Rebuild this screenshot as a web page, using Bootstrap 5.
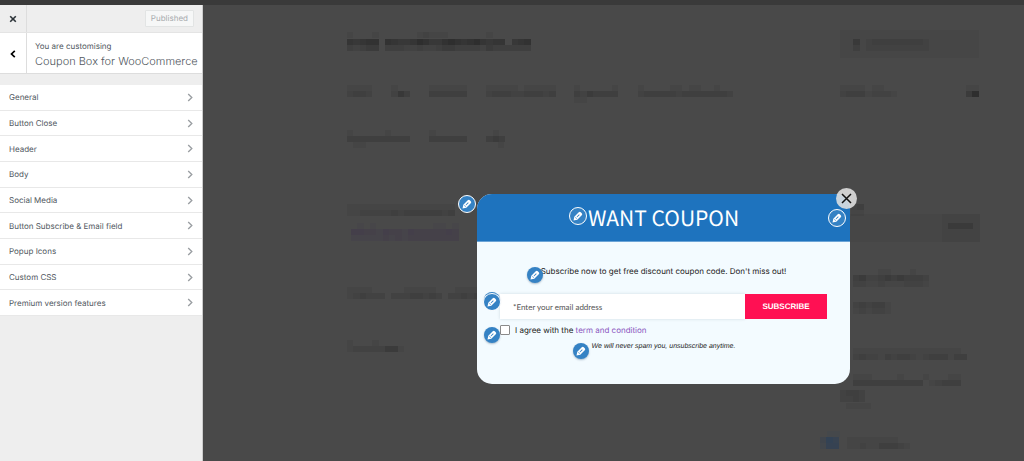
<!DOCTYPE html>
<html lang="en">
<head>
<meta charset="utf-8">
<meta name="viewport" content="width=device-width, initial-scale=1">
<title>Customise: Coupon Box for WooCommerce</title>
<link href="https://cdn.jsdelivr.net/npm/bootstrap@5.3.0/dist/css/bootstrap.min.css" rel="stylesheet">
<style>
  body { font-family: Inter, "Liberation Sans", sans-serif; font-size: 8px; line-height: 12px; color: #50575e; background: #494949; text-rendering: geometricPrecision; }
  button, input { text-rendering: inherit; }
  .topline { height: 5px; background: #3a3a3a; }
  .controls { width: 203px; background: #eee; border-right: 1px solid #ccc; }
  .tool-cell { width: 27px; border: 0; border-right: 1px solid #ddd; background: transparent; color: #1d2327; }
  .tools { height: 28px; border-bottom: 1px solid #e4e4e4; }
  .publish { height: 17px; padding: 0 5px; border: 1px solid #e2e4e4; border-radius: 1px; background: #f6f7f7; color: #a7aaad; line-height: 15px; }
  .heading-row { height: 41px; border-bottom: 1px solid #ddd; }
  .heading-text { padding: 7px 0 0 8px; }
  .panel-title { font-size: 11px; line-height: 18px; font-weight: 300; white-space: nowrap; }
  .sections { height: 231px; margin-top: 11px; }
  .sections a { padding: 0 9px; color: #50575e; border-bottom: 1px solid #e8e8e8; background: #fff; }
  .preview { background: #494949; overflow: hidden; padding: 189px 0 77px 100px; }
  .site { inset: 0 auto auto 0; width: 821px; height: 456px; }
  .coupon { width: 373px; height: 190px; border-radius: 15px; background: #f3fbff; font-family: "Liberation Sans", sans-serif; color: #222; }
  .coupon-head { height: 48px; border-radius: 15px 15px 0 0; background: #1e73be; border-bottom: 1px solid #6ba4d6; }
  .coupon-head h1 { font-family: "Noto Sans CJK SC", sans-serif; font-size: 21px; line-height: 48px; font-weight: 400; color: #fff; }
  .coupon-body { padding: 22px 23px 0; }
  .message { font-family: Inter, sans-serif; font-size: 8px; line-height: 14px; margin-bottom: 16px; }
  .email { height: 25px; padding: 0 13px; border: 0; background: #fff; font-family: Lato, sans-serif; font-size: 8px; box-shadow: 0 0 3px rgba(0,40,60,.15); color: #555; min-width: 0; }
  .email::placeholder { color: #555; opacity: 1; }
  .subscribe { width: 82px; height: 25px; border: 0; background: #ff1053; color: #fff; font-size: 8px; font-weight: 700; }
  .agree { font-family: Inter, sans-serif; font-size: 8px; line-height: 12px; margin-top: 5px; }
  .agree input { appearance: none; width: 10px; height: 10px; margin: 0 5px 0 0; border: 1px solid #8a8a8a; border-radius: 1px; background: #fff; }
  .agree a { color: #8a55c0; }
  .spam { font-size: 7px; line-height: 12px; margin-top: 5px; font-style: italic; }
  .edit { position: absolute; width: 16px; height: 16px; padding: 0; border: 0; border-radius: 50%; background: #3582c4; box-shadow: 0 1px 2px rgba(0,40,80,.3); display: flex; align-items: center; justify-content: center; }
  .edit.ringed { width: 18px; height: 18px; border: 1px solid #fff; box-shadow: none; }
  .edit svg { width: 10px; height: 10px; }
  .close-coupon { position: absolute; right: -7px; top: -6px; width: 21px; height: 21px; padding: 0; border: 0; border-radius: 50%; background: rgba(225,225,225,.88); display: flex; align-items: center; justify-content: center; }
</style>
<script src="https://cdn.jsdelivr.net/npm/bootstrap@5.3.0/dist/js/bootstrap.bundle.min.js"></script>
</head>
<body class="d-flex flex-column min-vh-100">
<svg class="d-none" aria-hidden="true">
  <symbol id="pencil" viewBox="0 0 20 20">
    <path fill="#fff" fill-rule="evenodd" d="M1 19l1.600-7.500L11.500 2.500q2-2 4 0l2 2q2 2 0 4l-9 9zM4.700 13.500l1.800 1.800 1.500-.5-2.800-2.800zM8.500 12.700l4.800-4.800-1.200-1.200-4.800 4.800z"/>
  </symbol>
  <symbol id="chevron" viewBox="0 0 6 10"><path d="M1 1l4 4-4 4" fill="none" stroke="#9a9ea2" stroke-width="1.500"/></symbol>
</svg>
<div class="topline"></div>
<div class="d-flex flex-fill">
  <aside class="controls flex-shrink-0">
    <div class="tools d-flex align-items-center">
      <button class="tool-cell h-100 p-0" aria-label="Close customiser"><svg width="8" height="8" viewBox="0 0 8 8"><path d="M1.200 1.200l5.600 5.600M6.800 1.200L1.200 6.800" stroke="#2c3338" stroke-width="1.600"/></svg></button>
      <button class="publish ms-auto me-2" disabled>Published</button>
    </div>
    <div class="heading-row d-flex bg-white">
      <button class="tool-cell flex-shrink-0 p-0" aria-label="Back"><svg width="6" height="8" viewBox="0 0 6 8"><path d="M4.800.800L1.500 4l3.300 3.200" fill="none" stroke="#000" stroke-width="1.700"/></svg></button>
      <div class="heading-text">
        <div>You are customising</div>
        <h2 class="panel-title m-0">Coupon Box for WooCommerce</h2>
      </div>
    </div>
    <nav class="sections d-flex flex-column" aria-label="Sections"></nav>
  </aside>
  <main class="preview position-relative flex-fill d-flex justify-content-center align-items-start">
    <svg class="site position-absolute" id="site" viewBox="203 5 821 456" aria-hidden="true" shape-rendering="crispEdges"></svg>
    <section class="coupon position-relative">
      <header class="coupon-head text-center"><h1 class="m-0">WANT COUPON</h1></header>
      <form class="coupon-body" onsubmit="return false">
        <p class="message text-center">Subscribe now to get free discount coupon code. Don't miss out!</p>
        <div class="d-flex">
          <input class="email flex-fill" type="email" placeholder="*Enter your email address" aria-label="Email address">
          <button class="subscribe">SUBSCRIBE</button>
        </div>
        <div class="agree d-flex align-items-center"><input type="checkbox" id="agree"><label for="agree">I agree with the <a href="#" class="text-decoration-none">term and condition</a></label></div>
        <p class="spam text-center mb-0">We will never spam you, unsubscribe anytime.</p>
      </form>
      <button class="edit ringed" style="left:-19px;top:1px" aria-label="Edit popup"><svg><use href="#pencil"/></svg></button>
      <button class="edit ringed" style="left:92px;top:13px" aria-label="Edit header"><svg><use href="#pencil"/></svg></button>
      <button class="edit ringed" style="left:351px;top:15px" aria-label="Edit close button"><svg><use href="#pencil"/></svg></button>
      <button class="edit" style="left:50px;top:73px" aria-label="Edit message"><svg><use href="#pencil"/></svg></button>
      <button class="edit" style="left:7px;top:98px" tabindex="-1" aria-label="Edit email field"></button>
      <button class="edit ringed" style="left:6px;top:99px" aria-label="Edit subscribe button"><svg><use href="#pencil"/></svg></button>
      <button class="edit" style="left:7px;top:133px" aria-label="Edit agreement"><svg><use href="#pencil"/></svg></button>
      <button class="edit" style="left:96px;top:149px" aria-label="Edit footer"><svg><use href="#pencil"/></svg></button>
      <button class="close-coupon" aria-label="Close"><svg width="11" height="11" viewBox="0 0 11 11"><path d="M1 1l9 9M10 1L1 10" stroke="#111" stroke-width="1.500"/></svg></button>
    </section>
  </main>
</div>
<script>
  document.querySelector('.sections').innerHTML = ['General', 'Button Close', 'Header', 'Body', 'Social Media',
    'Button Subscribe &amp; Email field', 'Popup Icons', 'Custom CSS', 'Premium version features'].map(name =>
    `<a href="#" class="d-flex flex-fill align-items-center justify-content-between text-decoration-none">${name}<svg width="6" height="9"><use href="#chevron"/></svg></a>`).join('');

  // Pixelated site behind the overlay: x, y, one shade digit per cell, optional tint
  const cell = 6.33;
  const mosaic = [
    [347, 32.3, '10001000000121110000001'], [347, 38.7, '65677076556875578767865660567888'.slice(0, 29)], [347, 45, '32344033322322344333324333333'],
    [347, 85, '11110001000001111110'], [347, 91, '2332000253000333333'],
    [486, 85, '11111011111'], [486, 91, '23332233323'], [574, 85, '1000001'], [574, 91, '3243333'], [574, 97, '11'],
    [638, 85, '100001101100100'], [638, 91, '233333233333332'],
    [347, 130, '100000100000010000000001'], [347, 136, '3333333333000333333000343'], [353, 142, '11'], [498, 142, '1'],
    [847, 38.7, '0401222222221'], [847, 45, '0201111111111'],
    [840, 85, '1111011'], [840, 91, '233312221'], [966, 85, '11'], [966, 91, '48'],
    [347, 204, '11111111111111111'], [347, 210, '11222223233333323'],
    [351, 223, '01010000000001101', '#35234f'], [351, 229, '44332433243333343', '#35234f'], [351, 235, '22222323233333333', '#35234f'],
    [347, 287, '111100000111110001111'], [347, 293, '1232220222332320223232'],
    [347, 340, '100010000'], [347, 346, '122222441'],
    [851, 204, '230'], [851, 210, '110'], [948, 223, '3333'],
    [853, 269, '000011000100'], [853, 275, '342234343332'], [853, 281, '221121112221'],
    [853, 302, '232331'], [853, 308, '121221'],
    [853, 348, '11111111111111111'], [853, 354, '232213233212333133'],
    [853, 374, '11100001000100011'], [853, 380, '333333333330123331'.slice(0, 17)],
    [840, 390, '2332'], [840, 396, '2232'], [846, 403, '1111'],
    [827, 431, '11', '#123d70'], [820, 437, '386', '#1c3a60'], [820, 443, '277', '#1c3a60'],
    [847, 437, '11111111'], [847, 443, '1121133321']
  ];
  const panels = [[840, 30, 139, 28], [846, 214, 134, 28], [942, 214, 38, 28]];
  const rect = (x, y, w, h, o, c) => `<rect x="${x}" y="${y}" width="${w}" height="${h}" fill="${c || '#000'}" opacity="${o}"/>`;
  document.getElementById('site').innerHTML =
    panels.map(([x, y, w, h]) => rect(x, y, w, h, .03)).join('') +
    mosaic.map(([x, y, row, tint]) => [...row].map((d, i) => +d ? rect(Math.round(x + i * cell), Math.round(y), Math.round(x + (i + 1) * cell) - Math.round(x + i * cell), 6, d * (tint ? .06 : .045), tint) : '').join('')).join('');
</script>
</body>
</html>
